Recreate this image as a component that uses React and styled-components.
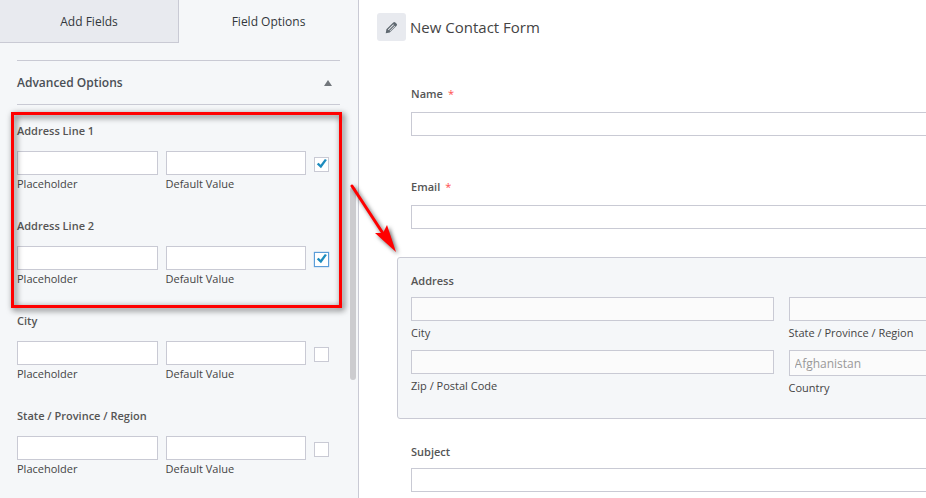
import { useId, useState } from "react";
import styled, { createGlobalStyle } from "styled-components";

const GlobalStyle = createGlobalStyle`
  * {
    box-sizing: border-box;
  }

  body {
    margin: 0;
    background-color: #ffffff;
    font-family: "Open Sans", "Noto Sans", sans-serif;
    color: #444444;
  }

  button,
  input,
  select {
    font-family: inherit;
  }
`;

const subfields = [
  { name: "Address Line 1", hidden: true },
  { name: "Address Line 2", hidden: true, focused: true },
  { name: "City" },
  { name: "State / Province / Region" },
];

function OptionRow({ data }) {
  const { name, hidden, focused } = data;
  const [checked, setChecked] = useState(Boolean(hidden));
  const id = useId();

  return (
    <Option>
      <legend>{name}</legend>
      <OptionInputs>
        <OptionInput>
          <input id={`${id}-placeholder`} type="text" />
          <label htmlFor={`${id}-placeholder`}>Placeholder</label>
        </OptionInput>
        <OptionInput>
          <input id={`${id}-default`} type="text" />
          <label htmlFor={`${id}-default`}>Default Value</label>
        </OptionInput>
        <Checkbox $focused={focused}>
          <input
            type="checkbox"
            aria-label={`Hide ${name}`}
            checked={checked}
            onChange={(e) => setChecked(e.target.checked)}
          />
          {checked && (
            <svg viewBox="0 0 15 15" aria-hidden="true">
              <path d="M2.8 7.2 L4.6 5.7 L6.6 7.8 L10.9 2 L12.9 3 L7 11.2 Z" />
            </svg>
          )}
        </Checkbox>
      </OptionInputs>
    </Option>
  );
}

function Field({ label, required }) {
  const id = useId();

  return (
    <FieldBox>
      <FieldLabel as="label" htmlFor={id} $required={required}>
        {label}
        {required && <Required>*</Required>}
      </FieldLabel>
      <TextInput id={id} type="text" />
    </FieldBox>
  );
}

function AddressPart({ label, country }) {
  const id = useId();

  return (
    <Part>
      {country ? (
        <Select id={id} disabled>
          <option>{country}</option>
        </Select>
      ) : (
        <TextInput id={id} type="text" disabled />
      )}
      <label htmlFor={id}>{label}</label>
    </Part>
  );
}

export default function App() {
  const [tab, setTab] = useState("options");
  const [open, setOpen] = useState(true);

  return (
    <Builder>
      <GlobalStyle />
      <Sidebar>
        <Tabs>
          <Tab $active={tab === "add"} onClick={() => setTab("add")}>
            Add Fields
          </Tab>
          <Tab $active={tab === "options"} onClick={() => setTab("options")}>
            Field Options
          </Tab>
        </Tabs>
        <Options>
          <SectionToggle onClick={() => setOpen(!open)}>
            Advanced Options
            <svg viewBox="0 0 8 6" aria-hidden="true">
              <path d="M4 0 L8 6 H0 Z" />
            </svg>
          </SectionToggle>
          {open && (
            <OptionList>
              <Highlighted>
                {subfields.slice(0, 2).map((item) => (
                  <OptionRow key={item.name} data={item} />
                ))}
              </Highlighted>
              {subfields.slice(2).map((item) => (
                <OptionRow key={item.name} data={item} />
              ))}
            </OptionList>
          )}
        </Options>
        <ScrollThumb />
        <Arrow viewBox="0 0 60 80" aria-hidden="true">
          <path d="M9 8 L41 57" stroke="#ff0000" strokeWidth="3" strokeLinecap="round" />
          <path d="M53 74 L32 55 L40 55 L44 47 Z" fill="#ff0000" />
        </Arrow>
      </Sidebar>

      <Preview>
        <Header>
          <EditButton aria-label="Edit form name">
            <svg viewBox="0 0 14 14" aria-hidden="true">
              <path
                fillRule="evenodd"
                d="M0.8 13.2 L1.5 8.9 L8.9 1.5 Q10 0.4 11.1 1.5 L12.5 2.9 Q13.6 4 12.5 5.1 L5.1 12.5 Z M3.2 9.2 L3.9 9.9 L9.6 4.2 L8.9 3.5 Z M4.8 10.8 L5.5 11.1 L11 5.6 L10.4 5 Z"
              />
            </svg>
          </EditButton>
          <h1>New Contact Form</h1>
        </Header>
        <Form>
          <Field label="Name" required />
          <Field label="Email" required />
          <FieldBox $active>
            <FieldLabel>Address</FieldLabel>
            <AddressGrid>
              <AddressPart label="City" />
              <AddressPart label="State / Province / Region" />
              <AddressPart label="Zip / Postal Code" />
              <AddressPart label="Country" country="Afghanistan" />
            </AddressGrid>
          </FieldBox>
          <Field label="Subject" />
        </Form>
      </Preview>
    </Builder>
  );
}

const Builder = styled.div`
  display: grid;
  grid-template-columns: minmax(0, 19fr) minmax(0, 30fr);
  min-height: 100vh;
`;

const Sidebar = styled.aside`
  position: relative;
  background-color: #f5f7f9;
  border-right: 1px solid #c9cad4;
`;

const Tabs = styled.div`
  display: grid;
  grid-template-columns: 1fr 1fr;
`;

const Tab = styled.button`
  height: 43px;
  padding: 0;
  border: 0 solid #c9cad4;
  border-width: ${(props) => (props.$active ? "0" : "0 1px 1px 0")};
  background-color: ${(props) => (props.$active ? "transparent" : "#e8eaef")};
  font-size: 12px;
  color: #32373c;
  cursor: pointer;
`;

const Options = styled.div`
  padding: 17px 18px 0 17px;
`;

const SectionToggle = styled.button`
  display: flex;
  align-items: center;
  justify-content: space-between;
  width: 100%;
  height: 45px;
  padding: 0 8px 0 0;
  border: 1px solid #c9cad4;
  border-width: 1px 0;
  background: none;
  font-size: 12px;
  font-weight: 600;
  color: #4a4f55;
  cursor: pointer;

  svg {
    width: 8px;
    height: 6px;
    fill: #72777c;
  }
`;

const OptionList = styled.div`
  display: flex;
  flex-direction: column;
  gap: 24px;
  padding: 17px 11px 0 0;
`;

const Highlighted = styled.div`
  position: relative;
  display: flex;
  flex-direction: column;
  gap: 24px;

  &::after {
    content: "";
    position: absolute;
    inset: -10px -13px -20px -6px;
    border: 3px solid #ff0000;
    filter: drop-shadow(2px 2px 3px rgba(0, 0, 0, 0.7));
    pointer-events: none;
  }
`;

const Option = styled.fieldset`
  min-width: 0;
  margin: 0;
  padding: 0;
  border: 0;

  legend {
    padding: 0;
    margin-bottom: 11px;
    font-size: 11px;
    font-weight: 600;
    line-height: 18px;
    color: #555555;
  }
`;

const OptionInputs = styled.div`
  display: grid;
  grid-template-columns: 1fr 1fr 15px;
  gap: 8px;
`;

const OptionInput = styled.div`
  display: flex;
  flex-direction: column;

  input {
    width: 100%;
    height: 24px;
    padding: 0 5px;
    border: 1px solid #c9cad4;
    background-color: #ffffff;
    font-size: 12px;
  }

  label {
    font-size: 11px;
    line-height: 18px;
  }
`;

const Checkbox = styled.div`
  position: relative;
  height: 15px;
  margin-top: 6px;

  input {
    appearance: none;
    display: block;
    width: 15px;
    height: 15px;
    margin: 0;
    border: 1px solid ${(props) => (props.$focused ? "#5b9dd9" : "#c9cad4")};
    background-color: #ffffff;
    box-shadow: ${(props) => (props.$focused ? "0 0 1px #5b9dd9" : "none")};
  }

  svg {
    position: absolute;
    inset: 0;
    fill: #1e8cbe;
    pointer-events: none;
  }
`;

const ScrollThumb = styled.div`
  position: absolute;
  top: 187px;
  right: 2px;
  width: 6px;
  height: 193px;
  border-radius: 3px;
  background-color: #cccccf;
`;

const Arrow = styled.svg`
  position: absolute;
  top: 178px;
  right: -45px;
  z-index: 1;
  width: 60px;
  height: 80px;
  filter: drop-shadow(2px 2px 2px rgba(0, 0, 0, 0.6));
  pointer-events: none;
`;

const Preview = styled.main`
  overflow: hidden;
  padding: 13px 0 0 18px;
`;

const Header = styled.header`
  display: flex;
  align-items: center;
  gap: 4px;

  h1 {
    margin: 0;
    font-size: 15px;
    font-weight: 500;
    line-height: 28px;
  }
`;

const EditButton = styled.button`
  display: flex;
  align-items: center;
  justify-content: center;
  width: 29px;
  height: 28px;
  padding: 0;
  border: 0;
  border-radius: 3px;
  background-color: #e8eaef;
  cursor: pointer;

  svg {
    width: 13px;
    height: 13px;
    fill: #5f6870;
  }
`;

const Form = styled.form`
  display: flex;
  flex-direction: column;
  gap: 9px;
  min-width: 788px;
  padding: 30px 0 0 20px;
`;

const FieldBox = styled.div`
  padding: 13px 13px 18px;
  border: 1px solid ${(props) => (props.$active ? "#c9cad4" : "transparent")};
  border-radius: 3px;
  background-color: ${(props) => (props.$active ? "#f5f7f9" : "transparent")};
`;

const FieldLabel = styled.div`
  display: block;
  margin-bottom: ${(props) => (props.$required ? "9px" : "6px")};
  font-size: 11px;
  font-weight: 600;
  line-height: ${(props) => (props.$required ? "18px" : "20px")};
  color: #555555;
`;

const Required = styled.span`
  margin-left: 5px;
  font-weight: 400;
  color: #ff4d4d;
`;

const TextInput = styled.input`
  display: block;
  width: 100%;
  height: 24px;
  padding: 0 5px;
  border: 1px solid #c9cad4;
  background-color: ${(props) => (props.disabled ? "#fbfbfb" : "#ffffff")};
  font-size: 12px;
`;

const Select = styled.select`
  appearance: none;
  display: block;
  width: 100%;
  height: 26px;
  padding: 0 5px;
  border: 1px solid #c9cad4;
  border-radius: 0;
  background-color: #fbfbfb;
  font-size: 12px;
  color: #999999;
  opacity: 1;
`;

const AddressGrid = styled.div`
  display: grid;
  grid-template-columns: 1fr 1fr;
  gap: 9px 15px;
  margin-bottom: 4px;
`;

const Part = styled.div`
  label {
    display: block;
    margin-top: 4px;
    font-size: 11px;
    line-height: 16px;
  }
`;
